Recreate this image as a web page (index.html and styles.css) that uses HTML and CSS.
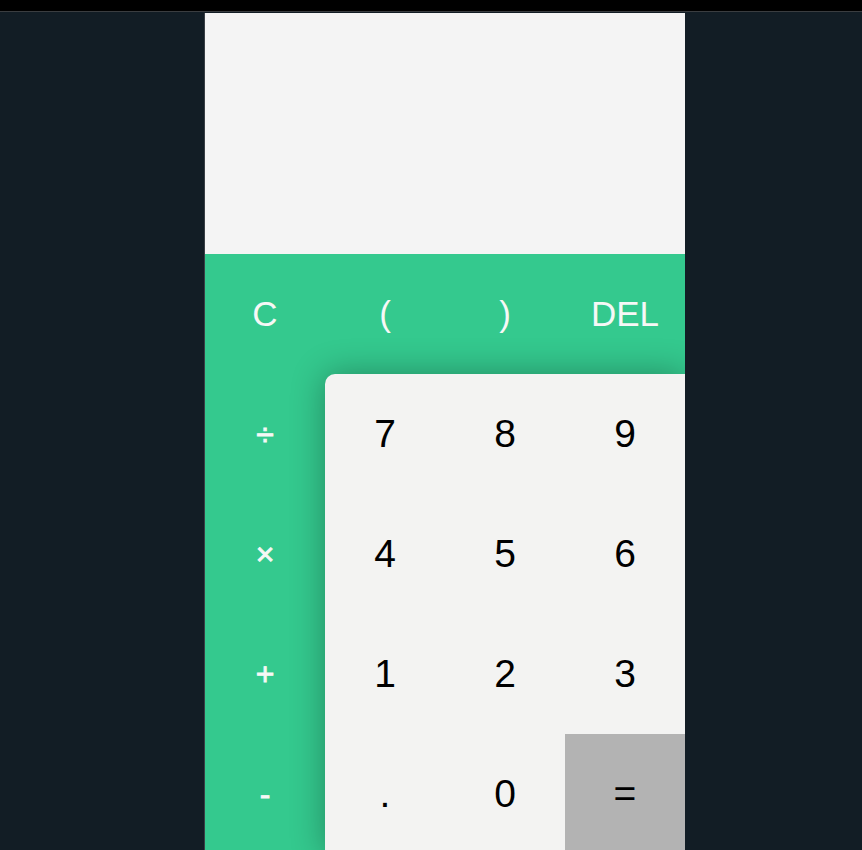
FILE: index.html
```html
<!DOCTYPE html>
<html lang="en">
<head>
<meta charset="utf-8">
<title>Calculator</title>
<link rel="stylesheet" href="styles.css">
</head>
<body>
<div class="topbar"></div>
<main class="stage">
  <div class="calc">
    <div class="display"></div>
    <div class="row-top">
      <div class="key op">C</div>
      <div class="key op">(</div>
      <div class="key op">)</div>
      <div class="key op">DEL</div>
    </div>
    <div class="lower">
      <div class="ops">
        <div class="key op sym">÷</div>
        <div class="key op sym">×</div>
        <div class="key op sym">+</div>
        <div class="key op sym">-</div>
      </div>
      <div class="pad">
        <div class="key num">7</div>
        <div class="key num">8</div>
        <div class="key num">9</div>
        <div class="key num">4</div>
        <div class="key num">5</div>
        <div class="key num">6</div>
        <div class="key num">1</div>
        <div class="key num">2</div>
        <div class="key num">3</div>
        <div class="key num">.</div>
        <div class="key num">0</div>
        <div class="key num eq">=</div>
      </div>
    </div>
  </div>
</main>
</body>
</html>
```
FILE: styles.css
```css
html, body {
  margin: 0;
  padding: 0;
  height: 100%;
  overflow: hidden;
}
body {
  background: #121d25;
  font-family: "Liberation Sans", Arial, sans-serif;
}
.topbar {
  height: 11px;
  background: #000;
  border-bottom: 1px solid #3a3d40;
}
.stage {
  padding-left: 204px;
}
.calc {
  width: 480px;
  border-left: 1px solid #3a4046;
  overflow: hidden;
  margin-top: 1px;
}
.display {
  height: 241px;
  background: #f4f4f4;
}
.row-top {
  display: flex;
  background: #34c98e;
}
.lower {
  display: flex;
  background: #34c98e;
}
.ops {
  display: flex;
  flex-direction: column;
}
.key {
  width: 120px;
  height: 120px;
  display: flex;
  align-items: center;
  justify-content: center;
}
.op {
  color: #f6f8f6;
  font-size: 35px;
}
.sym {
  font-size: 32px;
  -webkit-text-stroke: 0.8px #f6f8f6;
}
.pad {
  display: grid;
  grid-template-columns: repeat(3, 120px);
  grid-auto-rows: 120px;
  background: #f3f3f2;
  border-top-left-radius: 10px;
  box-shadow: 0 0 34px rgba(0, 0, 0, 0.32);
}
.num {
  color: #000;
  font-size: 39px;
}
.eq {
  background: #b3b3b3;
}
```
